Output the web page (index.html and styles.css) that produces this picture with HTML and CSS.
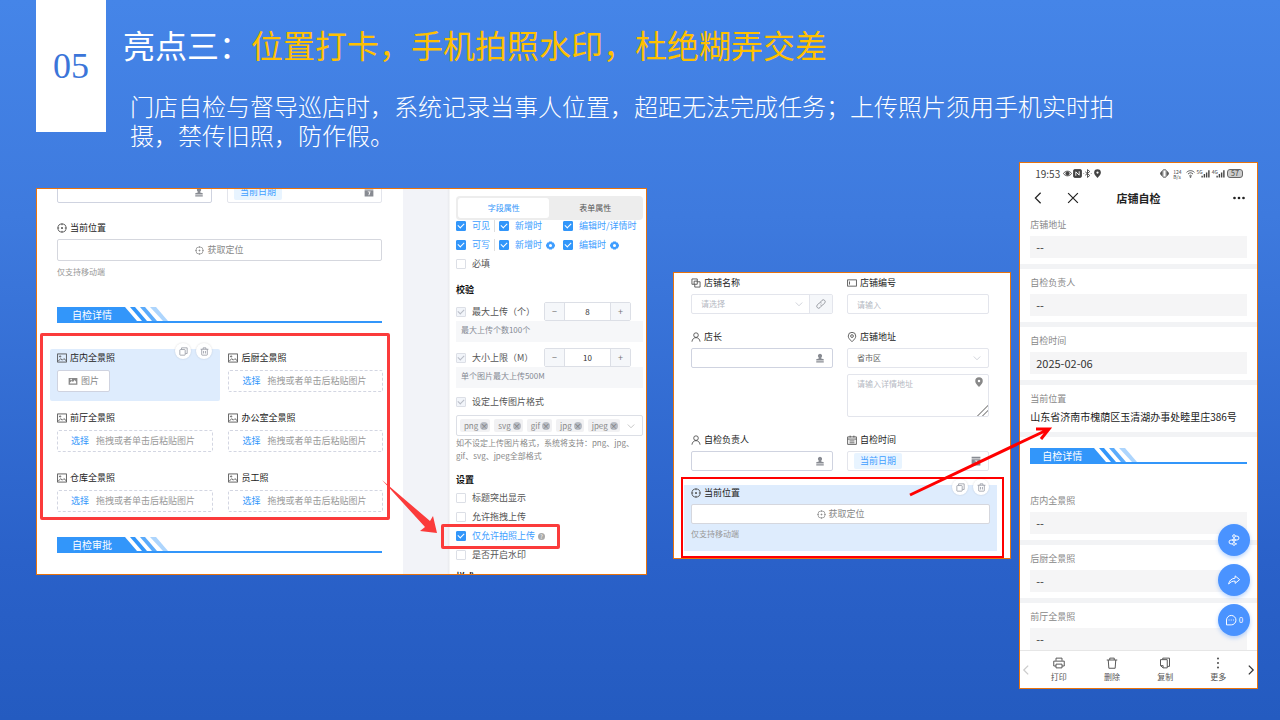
FILE: index.html
```html
<!DOCTYPE html>
<html lang="zh-CN">
<head>
  <meta charset="UTF-8">
  <meta name="viewport" content="width=device-width, initial-scale=1.0">
  <title>亮点三：位置打卡，手机拍照水印</title>
  <link rel="stylesheet" href="styles.css">
</head>
<body>
<!-- icons -->
<svg class="sprite" aria-hidden="true">
  <symbol id="i-target" viewBox="0 0 16 16"><circle cx="8" cy="8" r="6.5"/><circle cx="8" cy="8" r="1" fill="currentColor"/><path d="M8 .5v3M8 12.5v3M.5 8h3M12.5 8h3"/></symbol>
  <symbol id="i-image" viewBox="0 0 16 16"><rect x="1" y="1.5" width="14" height="13"/><circle cx="5" cy="5.5" r="1"/><path d="M2 13l4-4 2.500 2.500L11 9l4 3.500"/></symbol>
  <symbol id="i-picture" viewBox="0 0 16 16"><path fill="currentColor" stroke="none" fill-rule="evenodd" d="M1 3h14v11H1zM3 12h10V9l-2.500-2.500L8 9.500 6 8l-3 2.500zM5 4.500A1.200 1.200 0 1 0 5 7a1.200 1.200 0 0 0 0-2.500z"/></symbol>
  <symbol id="i-stamp" viewBox="0 0 16 16"><path fill="currentColor" stroke="none" d="M8 1a3.500 3.500 0 0 1 2.300 6c-.6.600-.6 1-.3 1.800l4 1V12H2V9.800l4-1c.3-.8.3-1.200-.3-1.800A3.500 3.500 0 0 1 8 1zM2 13h12v2H2z"/></symbol>
  <symbol id="i-day" viewBox="0 0 16 16"><path fill="currentColor" stroke="none" fill-rule="evenodd" d="M1 1h14v3H1zM1 5h14v10H1zM6 7v1.500h2.500L7 13h1.500L10.500 7z"/></symbol>
  <symbol id="i-copy" viewBox="0 0 16 16"><rect x="1.500" y="4.500" width="9.500" height="10" rx="1"/><path d="M4.500 4V1.500h10v10h-3"/></symbol>
  <symbol id="i-trash" viewBox="0 0 16 16"><path d="M1 4h14M5.500 4V1.500h5V4M3 4v9.500q0 1 1 1h8q1 0 1-1V4M6.300 7v4.500M9.700 7v4.500"/></symbol>
  <symbol id="i-gear" viewBox="0 0 16 16"><path fill="currentColor" stroke="none" fill-rule="evenodd" d="M5.500 1h5l1 1.700h2L16 7v2l-2.500 4.300h-2l-1 1.700h-5l-1-1.700h-2L0 9V7l2.500-4.300h2zM8 5.300a2.700 2.700 0 1 0 0 5.400 2.700 2.700 0 0 0 0-5.400z"/></symbol>
  <symbol id="i-down" viewBox="0 0 16 16"><path d="M1.500 5L8 11.500 14.500 5"/></symbol>
  <symbol id="i-relate" viewBox="0 0 16 16"><path d="M10 5V1.500H1.500V10H5M5 5h5v5H5zM10 6h4.500v8.500H6V10"/></symbol>
  <symbol id="i-text" viewBox="0 0 16 16"><rect x="1" y="3" width="14" height="10"/><path d="M4 5.500v5"/></symbol>
  <symbol id="i-user" viewBox="0 0 16 16"><circle cx="8" cy="5" r="3.700"/><path d="M1.500 15.500c.5-4 3-6.500 6.500-6.500s6 2.500 6.500 6.500"/></symbol>
  <symbol id="i-pin" viewBox="0 0 16 16"><path d="M8 15.500C4 11.500 2 9.500 2 6.500a6 6 0 0 1 12 0c0 3-2 5-6 9z"/><circle cx="8" cy="6.500" r="2.200"/></symbol>
  <symbol id="i-pin-fill" viewBox="0 0 16 16"><path fill="currentColor" stroke="none" fill-rule="evenodd" d="M8 16C4 11.500 2 9.500 2 6.300a6 6 0 0 1 12 0C14 9.500 12 11.500 8 16zM8 4.300a2 2 0 1 0 0 4 2 2 0 0 0 0-4z"/></symbol>
  <symbol id="i-cal" viewBox="0 0 16 16"><path d="M1 3h14v12H1zM1 6.500h14M5 1v3M11 1v3M4 9.500h8M4 12.500h8"/></symbol>
  <symbol id="i-link" viewBox="0 0 16 16"><path d="M7 5l2.500-2.800a2.800 2.800 0 0 1 4.300 4.300L11 9.500q-2 1.500-4 0M9 11l-2.600 2.800a2.800 2.800 0 0 1-4.300-4.300L5 6.500q2-1.500 4 0"/></symbol>
  <symbol id="i-eye" viewBox="0 0 16 16"><path d="M.8 8C4 2.500 12 2.500 15.200 8 12 13.500 4 13.500.8 8z"/><circle cx="8" cy="8" r="3" fill="currentColor"/></symbol>
  <symbol id="i-nfc" viewBox="0 0 16 16"><rect x="1" y="1" width="14" height="14" rx="2" fill="currentColor"/><path stroke="#fff" d="M5 12V5l6 6V4"/></symbol>
  <symbol id="i-bt" viewBox="0 0 16 16"><path d="M4 5l8 6.500L8 15V1l4 3.500L4 11M1 8h1M14 8h1"/></symbol>
  <symbol id="i-vibrate" viewBox="0 0 16 16"><rect x="5" y="1.500" width="6" height="13" rx="1"/><path d="M2.700 4v8M13.300 4v8M.7 6v4M15.300 6v4"/></symbol>
  <symbol id="i-wifi" viewBox="0 0 16 16"><path d="M1 6c4-4 10-4 14 0M3.500 9c3-3 6-3 9 0M6 12c1.500-1.300 2.500-1.300 4 0"/><circle cx="8" cy="14" r="1"/></symbol>
  <symbol id="i-signal" viewBox="0 0 16 16"><path stroke-width="2.500" d="M2 15v-3M6 15V9M10 15V6M14 15V2"/></symbol>
  <symbol id="i-back" viewBox="0 0 16 16"><path d="M11.500 1L4.500 8l7 7"/></symbol>
  <symbol id="i-next" viewBox="0 0 16 16"><path d="M4.500 1l7 7-7 7"/></symbol>
  <symbol id="i-close" viewBox="0 0 16 16"><path d="M1.500 1.500l13 13M14.500 1.500l-13 13"/></symbol>
  <symbol id="i-dots" viewBox="0 0 16 16"><g fill="currentColor" stroke="none"><circle cx="2" cy="8" r="1.800"/><circle cx="8" cy="8" r="1.800"/><circle cx="14" cy="8" r="1.800"/></g></symbol>
  <symbol id="i-vdots" viewBox="0 0 16 16"><g fill="currentColor" stroke="none"><circle cx="8" cy="2" r="1.400"/><circle cx="8" cy="8" r="1.400"/><circle cx="8" cy="14" r="1.400"/></g></symbol>
  <symbol id="i-print" viewBox="0 0 16 16"><path d="M4 5V1.500h8V5M4 12H1V5.500h14V12h-3M4 9.500h8v5H4z"/></symbol>
  <symbol id="i-bin" viewBox="0 0 16 16"><path d="M1 4h14M5 4V1.500h6V4M3 4l.8 11h8.400L13 4"/></symbol>
  <symbol id="i-pages" viewBox="0 0 16 16"><path d="M5 3V1.500h9v11h-3M2 3.500h9v11H5.500L2 11.500zM2 11.500h3.500v3"/></symbol>
  <symbol id="i-route" viewBox="0 0 16 16"><circle cx="8" cy="2.800" r="1.800"/><circle cx="8" cy="8" r="1.800"/><circle cx="8" cy="13.200" r="1.800"/><path d="M9.800 2.800H12a2.600 2.600 0 0 1 0 5.200H4a2.600 2.600 0 0 0 0 5.200h2.200M9.800 13.200H12"/></symbol>
  <symbol id="i-share" viewBox="0 0 16 16"><path d="M9.500 2.500L15.500 7.500l-6 5V9.500C6 9.300 3 10.500.8 13.500 1.500 9 4.500 6 9.500 5.500z"/></symbol>
  <symbol id="i-chat" viewBox="0 0 16 16"><path d="M2 14.500V8a6.300 6.300 0 1 1 6.300 6.500z"/><path d="M4.800 8h1.200M7.700 8h1.200M10.600 8h1.200"/></symbol>
  <symbol id="i-stripes" viewBox="0 0 45 14"><g fill="#3296fa" stroke="none"><path d="M0 0h1l12 14H0z"/><path d="M6 0h5l12 14h-5z"/><path opacity=".8" d="M16 0h5l12 14h-5z"/><path opacity=".4" d="M26 0h6l12 14h-5z"/></g></symbol>
</svg>

<main class="slide">
  <header class="head">
    <div class="number">05</div>
    <div class="intro">
      <h1>亮点三：<em>位置打卡，手机拍照水印，杜绝糊弄交差</em></h1>
      <p>门店自检与督导巡店时，系统记录当事人位置，超距无法完成任务；上传照片须用手机实时拍摄，禁传旧照，防作假。</p>
    </div>
  </header>

  <div class="shots">
    <!-- form designer -->
    <section class="shot designer">
      <div class="canvas">
        <div class="pair">
          <div class="field"><input type="text" aria-label="自检负责人"><svg class="icon"><use href="#i-stamp"/></svg></div>
          <div class="field light"><span class="date-tag">当前日期</span><svg class="icon end"><use href="#i-day"/></svg></div>
        </div>
        <div class="label loc-label"><svg class="icon"><use href="#i-target"/></svg>当前位置</div>
        <button class="locate"><svg class="icon"><use href="#i-target"/></svg>获取定位</button>
        <div class="hint">仅支持移动端</div>
        <div class="section first"><span>自检详情</span><svg><use href="#i-stripes"/></svg></div>

        <div class="photos">
          <div class="cell selected">
            <div class="tools">
              <button aria-label="复制"><svg class="icon"><use href="#i-copy"/></svg></button>
              <button aria-label="删除"><svg class="icon"><use href="#i-trash"/></svg></button>
            </div>
            <div class="label"><svg class="icon"><use href="#i-image"/></svg>店内全景照</div>
            <button class="pic-btn"><svg class="icon"><use href="#i-picture"/></svg>图片</button>
          </div>
          <div class="cell">
            <div class="label"><svg class="icon"><use href="#i-image"/></svg>后厨全景照</div>
            <div class="drop"><button>选择</button>拖拽或者单击后粘贴图片</div>
          </div>
          <div class="cell">
            <div class="label"><svg class="icon"><use href="#i-image"/></svg>前厅全景照</div>
            <div class="drop"><button>选择</button>拖拽或者单击后粘贴图片</div>
          </div>
          <div class="cell">
            <div class="label"><svg class="icon"><use href="#i-image"/></svg>办公室全景照</div>
            <div class="drop"><button>选择</button>拖拽或者单击后粘贴图片</div>
          </div>
          <div class="cell">
            <div class="label"><svg class="icon"><use href="#i-image"/></svg>仓库全景照</div>
            <div class="drop"><button>选择</button>拖拽或者单击后粘贴图片</div>
          </div>
          <div class="cell">
            <div class="label"><svg class="icon"><use href="#i-image"/></svg>员工照</div>
            <div class="drop"><button>选择</button>拖拽或者单击后粘贴图片</div>
          </div>
        </div>

        <div class="section"><span>自检审批</span><svg><use href="#i-stripes"/></svg></div>
      </div>

      <aside class="props">
        <div class="tabs"><button class="active">字段属性</button><button>表单属性</button></div>
        <div class="checks">
          <label class="check on parted"><input type="checkbox" checked>可见</label>
          <label class="check on"><input type="checkbox" checked>新增时</label>
          <label class="check on"><input type="checkbox" checked>编辑时/详情时</label>
          <label class="check on parted"><input type="checkbox" checked>可写</label>
          <label class="check on"><input type="checkbox" checked>新增时<svg class="icon gear"><use href="#i-gear"/></svg></label>
          <label class="check on"><input type="checkbox" checked>编辑时<svg class="icon gear"><use href="#i-gear"/></svg></label>
          <label class="check"><input type="checkbox">必填</label>
        </div>

        <h2>校验</h2>
        <div class="limit">
          <label class="check"><input type="checkbox" checked disabled>最大上传（个）</label>
          <div class="stepper"><button>−</button><input type="text" value="8" aria-label="最大上传个数"><button>+</button></div>
        </div>
        <div class="note">最大上传个数100个</div>
        <div class="limit">
          <label class="check"><input type="checkbox" checked disabled>大小上限（M）</label>
          <div class="stepper"><button>−</button><input type="text" value="10" aria-label="大小上限"><button>+</button></div>
        </div>
        <div class="note">单个图片最大上传500M</div>
        <label class="check format"><input type="checkbox" checked disabled>设定上传图片格式</label>
        <div class="tags">
          <span>png<button aria-label="移除png">×</button></span>
          <span>svg<button aria-label="移除svg">×</button></span>
          <span>gif<button aria-label="移除gif">×</button></span>
          <span>jpg<button aria-label="移除jpg">×</button></span>
          <span>jpeg<button aria-label="移除jpeg">×</button></span>
          <svg class="icon"><use href="#i-down"/></svg>
        </div>
        <p class="help">如不设定上传图片格式，系统将支持：png、jpg、gif、svg、jpeg全部格式</p>

        <h2 class="set-title">设置</h2>
        <div class="options">
          <label class="check"><input type="checkbox">标题突出显示</label>
          <label class="check"><input type="checkbox">允许拖拽上传</label>
          <label class="check on marked"><input type="checkbox" checked>仅允许拍照上传<i class="tip">?</i></label>
          <label class="check"><input type="checkbox">是否开启水印</label>
        </div>
        <h2 class="style-title">样式</h2>
      </aside>

      <svg class="pointer" viewBox="0 0 56 54" width="56" height="54"><path fill="#fb3b3b" d="M0 0L48 41 51 36 55 53 38 51 43 47z"/></svg>
    </section>

    <!-- store form -->
    <section class="shot store">
      <div class="store-grid">
        <div>
          <label class="label" for="shop"><svg class="icon"><use href="#i-relate"/></svg>店铺名称</label>
          <div class="field joined">
            <select id="shop" class="empty"><option>请选择</option></select>
            <svg class="icon arrow"><use href="#i-down"/></svg>
            <button class="link-btn" aria-label="关联"><svg class="icon"><use href="#i-link"/></svg></button>
          </div>
        </div>
        <div>
          <label class="label" for="code"><svg class="icon"><use href="#i-text"/></svg>店铺编号</label>
          <div class="field light"><input id="code" type="text" placeholder="请输入"></div>
        </div>
        <div>
          <label class="label" for="manager"><svg class="icon"><use href="#i-user"/></svg>店长</label>
          <div class="field"><input id="manager" type="text"><svg class="icon"><use href="#i-stamp"/></svg></div>
        </div>
        <div>
          <label class="label" for="area"><svg class="icon"><use href="#i-pin"/></svg>店铺地址</label>
          <div class="field light"><select id="area"><option>省市区</option></select><svg class="icon arrow"><use href="#i-down"/></svg></div>
          <div class="address"><textarea placeholder="请输入详情地址" aria-label="详情地址"></textarea><svg class="icon"><use href="#i-pin-fill"/></svg></div>
        </div>
        <div>
          <label class="label" for="owner"><svg class="icon"><use href="#i-user"/></svg>自检负责人</label>
          <div class="field"><input id="owner" type="text"><svg class="icon"><use href="#i-stamp"/></svg></div>
        </div>
        <div>
          <div class="label"><svg class="icon"><use href="#i-cal"/></svg>自检时间</div>
          <div class="field light"><span class="date-tag">当前日期</span><svg class="icon end"><use href="#i-day"/></svg></div>
        </div>
      </div>
      <div class="frame">
        <div class="place">
          <div class="tools">
            <button aria-label="复制"><svg class="icon"><use href="#i-copy"/></svg></button>
            <button aria-label="删除"><svg class="icon"><use href="#i-trash"/></svg></button>
          </div>
          <div class="label"><svg class="icon"><use href="#i-target"/></svg>当前位置</div>
          <button class="locate"><svg class="icon"><use href="#i-target"/></svg>获取定位</button>
          <div class="hint">仅支持移动端</div>
        </div>
      </div>
    </section>

    <!-- phone -->
    <section class="shot phone">
      <div class="status">
        <span class="time">19:53</span>
        <svg class="icon"><use href="#i-eye"/></svg><svg class="icon"><use href="#i-nfc"/></svg><svg class="icon"><use href="#i-bt"/></svg><svg class="icon"><use href="#i-pin-fill"/></svg>
        <div class="right">
          <svg class="icon"><use href="#i-vibrate"/></svg>
          <span class="rate">124<br>B/s</span>
          <svg class="icon"><use href="#i-wifi"/></svg>
          <span class="gen">5G</span><svg class="icon"><use href="#i-signal"/></svg>
          <span class="gen">4G</span><svg class="icon"><use href="#i-signal"/></svg>
          <span class="battery">57</span>
        </div>
      </div>
      <nav class="bar">
        <button aria-label="返回"><svg class="icon"><use href="#i-back"/></svg></button>
        <button aria-label="关闭"><svg class="icon"><use href="#i-close"/></svg></button>
        <h2>店铺自检</h2>
        <button aria-label="更多"><svg class="icon"><use href="#i-dots"/></svg></button>
      </nav>
      <div class="card"><h3>店铺地址</h3><div class="value">--</div></div>
      <div class="card"><h3>自检负责人</h3><div class="value">--</div></div>
      <div class="card"><h3>自检时间</h3><div class="value">2025-02-06</div></div>
      <div class="card location"><h3>当前位置</h3><p>山东省济南市槐荫区玉清湖办事处睦里庄386号</p></div>
      <div class="section"><span>自检详情</span><svg><use href="#i-stripes"/></svg></div>
      <div class="card"><h3>店内全景照</h3><div class="value">--</div></div>
      <div class="card"><h3>后厨全景照</h3><div class="value">--</div></div>
      <div class="card last"><h3>前厅全景照</h3><div class="value">--</div></div>
      <div class="fabs">
        <button aria-label="流程"><svg class="icon"><use href="#i-route"/></svg></button>
        <button aria-label="分享"><svg class="icon"><use href="#i-share"/></svg></button>
        <button><svg class="icon"><use href="#i-chat"/></svg>0</button>
      </div>
      <footer class="actions">
        <svg class="icon faded"><use href="#i-back"/></svg>
        <button><svg class="icon"><use href="#i-print"/></svg>打印</button>
        <button><svg class="icon"><use href="#i-bin"/></svg>删除</button>
        <button><svg class="icon"><use href="#i-pages"/></svg>复制</button>
        <button><svg class="icon"><use href="#i-vdots"/></svg>更多</button>
        <svg class="icon"><use href="#i-next"/></svg>
      </footer>
      <svg class="red-line" viewBox="0 0 144 72" width="144" height="72"><path fill="none" stroke="#f00" stroke-width="3" d="M1 69L138 4M127 3l13 0-8 10"/></svg>
    </section>
  </div>
</main>
</body>
</html>
```

FILE: styles.css
```css
*, *::before, *::after { box-sizing: border-box; }
body { margin: 0; font-family: "Noto Sans CJK SC", sans-serif; font-size: 9px; line-height: 12px; color: #333; }
h1, h2, h3, p { margin: 0; font-size: 9px; font-weight: normal; }
button, input, select, textarea { font: inherit; color: inherit; margin: 0; padding: 0; border: 0; background: none; outline: 0; min-width: 0; }
button { cursor: pointer; }
.sprite { display: none; }
.icon { width: 10px; height: 10px; flex: none; fill: none; stroke: currentColor; stroke-width: 1.3; }

.slide { min-height: 100vh; background: linear-gradient(#4585e8, #3e7ade 30%, #2a61c9 78%, #245bc0); }

/* heading */
.head { display: flex; height: 162px; padding-left: 36px; }
.number { width: 70px; height: 132px; background: #fff; color: #3b75d9; font: 36px/132px "Liberation Serif", serif; text-align: center; }
.intro { flex: 1; padding: 22px 0 0 17px; color: #fff; }
.intro h1 { font-size: 32px; line-height: 44px; }
.intro em { font-style: normal; color: #ffc000; }
.intro p { max-width: 1000px; margin-top: 25px; padding-left: 7px; font-size: 24px; line-height: 29px; font-weight: 300; }

.shots { display: flex; align-items: flex-start; padding: 0 22px 30px 36px; }
.shot { position: relative; background: #fff; border: 1px solid #e8730c; min-width: 0; }
.designer { flex: 612 1 0; display: flex; height: 387px; margin-top: 26px; overflow: hidden; }
.store { flex: 338 1 0; margin: 110px 8px 0 26px; }
.phone { flex: 238 1 0; }

/* shared form parts */
.label { display: flex; align-items: center; gap: 3px; height: 12px; color: #222; }
.label .icon { color: #444; }
.field { display: flex; align-items: center; height: 20px; padding-right: 7px; border: 1px solid #cfd3e0; border-radius: 2px; background: #fff; color: #888b92; }
.field.light { border-color: #e3e5ec; }
.field input, .field select { flex: 1; height: 100%; padding-left: 9px; appearance: none; color: #666; font-size: 8px; }
.field .end { margin-left: auto; }
.field .arrow { width: 8px; height: 8px; color: #b8bcc6; }
.field .empty, ::placeholder { color: #b4b8c2; opacity: 1; }
.date-tag { height: 16px; margin-left: 6px; padding: 0 6px; border-radius: 2px; background: #e8f4ff; color: #409eff; line-height: 16px; }
.locate { display: flex; align-items: center; justify-content: center; gap: 3px; width: 100%; height: 20px; border: 1px solid #d5d7de; border-radius: 2px; background: #fff; color: #888; }
.locate .icon { width: 9px; height: 9px; }
.hint { color: #999; font-size: 8px; }
.tools { position: absolute; top: -6px; right: 8px; display: flex; gap: 5px; }
.tools button { display: flex; align-items: center; justify-content: center; width: 16px; height: 16px; border-radius: 50%; background: #fff; box-shadow: 0 0 2px rgba(0,0,0,.15); color: #8a8f99; }
.tools .icon { width: 9px; height: 9px; }
.section { display: flex; height: 16px; border-bottom: 2px solid #3296fa; }
.section span { width: 67px; height: 16px; padding-left: 15px; background: #3296fa; color: #fff; font-size: 10px; line-height: 16px; }
.section svg { width: 45px; height: 14px; }

/* designer */
.canvas { flex: 1; padding: 0 21px 0 20px; }
.canvas .pair { display: grid; grid-template-columns: 1fr 1fr; gap: 15px; margin-top: -8px; }
.canvas .field, .canvas .locate { height: 22px; }
.canvas .loc-label { margin: 19px 0 5px; }
.canvas .hint { margin-top: 5px; }
.canvas .section { margin-top: 17px; }
.canvas .section.first { margin-top: 29px; }
.photos { display: grid; grid-template-columns: 170fr 166fr; row-gap: 17px; margin: 10px -8px 0 -17px; padding: 13px 0 5px 7px; border: 3px solid #fb3b3b; border-radius: 2px; }
.cell { position: relative; padding: 3px 4px 0 8px; }
.cell:nth-child(odd) { padding: 3px 7px 0; }
.cell.selected { margin-bottom: -9px; padding-bottom: 9px; background: #deecfd; border-radius: 2px; }
.drop { display: flex; align-items: center; gap: 7px; height: 22px; margin-top: 6px; padding-left: 13px; border: 1px dashed #d3d6e2; border-radius: 2px; color: #999; white-space: nowrap; }
.drop button { color: #3296fa; }
.pic-btn { display: flex; align-items: center; justify-content: center; gap: 3px; width: 53px; height: 22px; margin-top: 6px; border: 1px solid #cfd3e0; border-radius: 2px; background: #fff; color: #888; }

.props { width: 243px; padding: 7px 3px 0 53px; background: linear-gradient(90deg, #f2f3f8 44px, #e9eaee 46px, #fff 47px); }
.tabs { display: flex; height: 24px; padding: 2px; border-radius: 4px; background: #ededed; font-size: 8px; color: #555; }
.tabs button { flex: 1; border-radius: 3px; }
.tabs .active { background: #fff; color: #3296fa; }
.checks { display: grid; grid-template-columns: 43px 64px 1fr; row-gap: 7px; }
.check { display: flex; align-items: center; gap: 6px; height: 12px; color: #555; white-space: nowrap; }
.check.on { color: #409eff; }
.check.parted { width: 39px; border-right: 1px solid #ddd; }
.check input { position: relative; flex: none; width: 10px; height: 10px; border: 1px solid #dcdfe6; border-radius: 1px; background: #fff; appearance: none; }
.check input:checked { background: #3296fa; border-color: #3296fa; }
.check input:disabled { background: #f2f5fa; border-color: #dcdfe6; }
.check input:checked::after { content: ""; position: absolute; left: 2px; top: 0; width: 4px; height: 6px; border: solid #fff; border-width: 0 1px 1px 0; transform: rotate(45deg); }
.check input:disabled::after { border-color: #b8bcc6; }
.check .gear { width: 9px; height: 9px; margin-left: -2px; }
.props h2 { margin-top: 14px; color: #111; font-weight: bold; }
.limit { display: flex; align-items: center; justify-content: space-between; height: 19px; margin-top: 6px; padding-right: 12px; }
.stepper { display: flex; width: 87px; height: 19px; border: 1px solid #dcdfe6; border-radius: 2px; }
.stepper button { width: 19px; background: #f5f7fa; color: #777; }
.stepper input { flex: 1; border: solid #dcdfe6; border-width: 0 1px; text-align: center; font-size: 8px; }
.note { height: 21px; padding-left: 5px; background: #f6f7f9; color: #858a94; font-size: 8px; line-height: 18px; }
.format { margin: 8px 0 7px; }
.tags { display: flex; align-items: center; gap: 4px; height: 21px; padding: 0 7px 0 3px; border: 1px solid #dcdfe6; border-radius: 2px; }
.tags span { display: flex; align-items: center; gap: 2px; height: 13px; padding: 0 2px 0 4px; border-radius: 2px; background: #f1f1f3; color: #888; font-size: 8px; }
.tags button { width: 8px; height: 8px; border-radius: 50%; background: #b8bcc4; color: #777; font-size: 8px; line-height: 8px; }
.tags .icon { width: 8px; height: 8px; margin-left: auto; color: #aaa; }
.help { color: #888; font-size: 8px; line-height: 13px; }
.props .set-title { margin: 12px 0 6px; }
.options { display: grid; row-gap: 7px; }
.marked { position: relative; }
.marked::before { content: ""; position: absolute; left: -15px; top: -6px; width: 119px; height: 25px; border: 3px solid #fb3b3b; border-radius: 2px; }
.tip { width: 7px; height: 7px; margin-left: -3px; border-radius: 50%; background: #aaa; color: #fff; font-size: 6px; font-style: normal; line-height: 7px; text-align: center; }
.props .style-title { margin-top: 10px; }
.pointer { position: absolute; left: 345px; top: 291px; }

/* store form */
.store-grid { display: grid; grid-template-columns: 1fr 1fr; gap: 17px 14px; padding: 4px 21px 0 17px; }
.store .field { margin-top: 5px; }
.store .field.joined { padding-right: 0; border-color: #e3e5ec; }
.joined .arrow { margin-right: 6px; }
.link-btn { display: flex; align-items: center; justify-content: center; width: 23px; height: 18px; border-left: 1px solid #e3e5ec; background: #f5f7fa; }
.address { position: relative; height: 43px; margin-top: 6px; }
.address textarea { display: block; width: 100%; height: 43px; padding: 3px 9px; border: 1px solid #e3e5ec; border-radius: 2px; font-size: 8px; }
.address textarea::-webkit-resizer { background: linear-gradient(135deg, transparent 60%, #aaa 60%, #aaa 67%, transparent 67%, transparent 78%, #aaa 78%, #aaa 85%, transparent 85%); }
.address .icon { position: absolute; right: 5px; top: 3px; color: #888; }
.frame { margin: 6px 6px 0 7px; padding: 6px 5px 5px 1px; border: 2px solid #f00; }
.place { position: relative; height: 66px; padding: 2px 7px; background: #deecfd; }
.place .locate { margin: 5px 0 4px; }

/* phone */
.status { display: flex; align-items: center; gap: 1px; height: 21px; padding: 0 14px 0 15px; color: #444; }
.status .time { margin-right: 2px; font-size: 10px; }
.status .icon { width: 9px; height: 9px; stroke-width: 1.6; }
.status .right { display: flex; align-items: center; gap: 2px; margin-left: auto; }
.rate { margin: 0 2px; font-size: 5px; line-height: 5px; }
.gen { align-self: flex-start; margin-right: -4px; font-size: 5px; line-height: 5px; }
.battery { width: 16px; height: 9px; border: 1px solid #666; border-radius: 3px; background: #ccc; font-size: 7px; line-height: 7px; text-align: center; }
.bar { display: grid; grid-template-columns: 36px 34px 1fr 70px; align-items: center; height: 27px; color: #222; text-align: center; }
.bar h2 { font-size: 11px; font-weight: bold; }
.bar .icon { display: block; width: 12px; height: 12px; margin: auto; stroke-width: 1.6; }
.bar button:last-child .icon { margin-right: 12px; }
.card { padding: 7px 10px 6px; border-bottom: 5px solid #f2f3f5; }
.card h3 { color: #888; line-height: 14px; }
.card .value { height: 22px; margin-top: 4px; padding-left: 6px; background: #f5f5f6; font-size: 11px; line-height: 22px; }
.card.location { padding-bottom: 7px; }
.location p { margin-top: 3px; color: #222; font-size: 10px; line-height: 16px; white-space: nowrap; }
.phone .section { margin: 11px 10px 23px; }
.phone .section span { width: 63px; padding-left: 12px; }
.card.last { padding-bottom: 0; border: 0; }
.fabs { position: absolute; right: 7px; top: 361px; display: grid; gap: 8px; }
.fabs button { display: flex; align-items: center; justify-content: center; gap: 2px; width: 32px; height: 32px; border-radius: 50%; background: #4a93ff; box-shadow: 0 2px 4px rgba(74,147,255,.4); color: #fff; font-size: 8px; }
.fabs .icon { width: 12px; height: 12px; }
.actions { display: flex; align-items: center; justify-content: space-between; height: 38px; padding: 0 1px; border-top: 1px solid #e6e6e6; color: #333; }
.actions button { display: grid; justify-items: center; gap: 2px; width: 51px; color: #555; font-size: 8px; }
.actions button .icon { width: 12px; height: 12px; }
.actions > .icon { stroke-width: 2; }
.actions .faded { color: #ccc; }
.red-line { position: absolute; left: -111px; top: 263px; z-index: 2; }
```
